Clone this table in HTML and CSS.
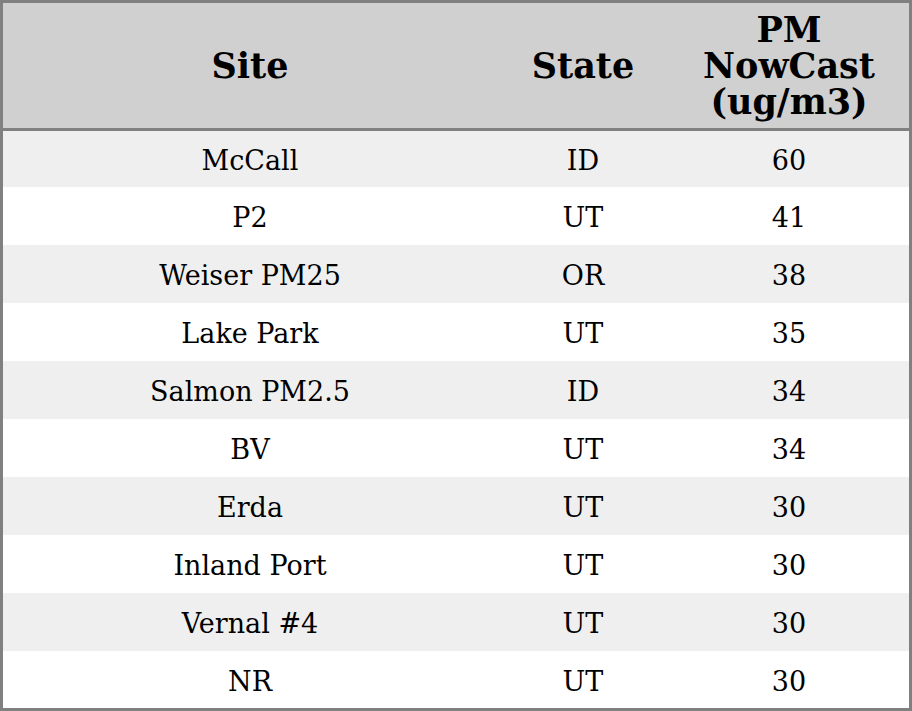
FILE: index.html
```html
<!DOCTYPE html>
<html>
<head>
<meta charset="utf-8">
<link rel="stylesheet" href="styles.css">
</head>
<body>
<table class="tbl">
  <colgroup>
    <col class="c-site">
    <col class="c-state">
    <col class="c-pm">
  </colgroup>
  <thead>
    <tr>
      <th>Site</th>
      <th>State</th>
      <th>PM NowCast (ug/m3)</th>
    </tr>
  </thead>
  <tbody>
    <tr class="r-first"><td>McCall</td><td>ID</td><td>60</td></tr>
    <tr><td>P2</td><td>UT</td><td>41</td></tr>
    <tr><td>Weiser PM25</td><td>OR</td><td>38</td></tr>
    <tr><td>Lake Park</td><td>UT</td><td>35</td></tr>
    <tr><td>Salmon PM2.5</td><td>ID</td><td>34</td></tr>
    <tr><td>BV</td><td>UT</td><td>34</td></tr>
    <tr><td>Erda</td><td>UT</td><td>30</td></tr>
    <tr><td>Inland Port</td><td>UT</td><td>30</td></tr>
    <tr><td>Vernal #4</td><td>UT</td><td>30</td></tr>
    <tr class="r-last"><td>NR</td><td>UT</td><td>30</td></tr>
  </tbody>
</table>
</body>
</html>
```
FILE: styles.css
```css
html, body {
  margin: 0;
  padding: 0;
  background: #ffffff;
}
.tbl {
  box-sizing: border-box;
  width: 912px;
  height: 711px;
  border-collapse: separate;
  border-spacing: 0;
  border: 3px solid #808080;
  font-family: "DejaVu Serif", serif;
  color: #000;
  table-layout: fixed;
}
.c-site { width: 494px; }
.c-state { width: 172px; }
.c-pm { width: 240px; }
.tbl th {
  background: #d0d0d0;
  font-size: 35px;
  font-weight: bold;
  line-height: 36px;
  height: 125px;
  padding: 0;
  border-bottom: 3px solid #808080;
  text-align: center;
  vertical-align: middle;
}
.tbl td {
  box-sizing: border-box;
  font-size: 27px;
  text-align: center;
  vertical-align: middle;
  padding: 3px 0 0 0;
  height: 58px;
}
.tbl .r-first td { height: 56px; }
.tbl .r-last td { height: 57px; }
.tbl tbody tr:nth-child(odd) td {
  background: #efefef;
}
```
